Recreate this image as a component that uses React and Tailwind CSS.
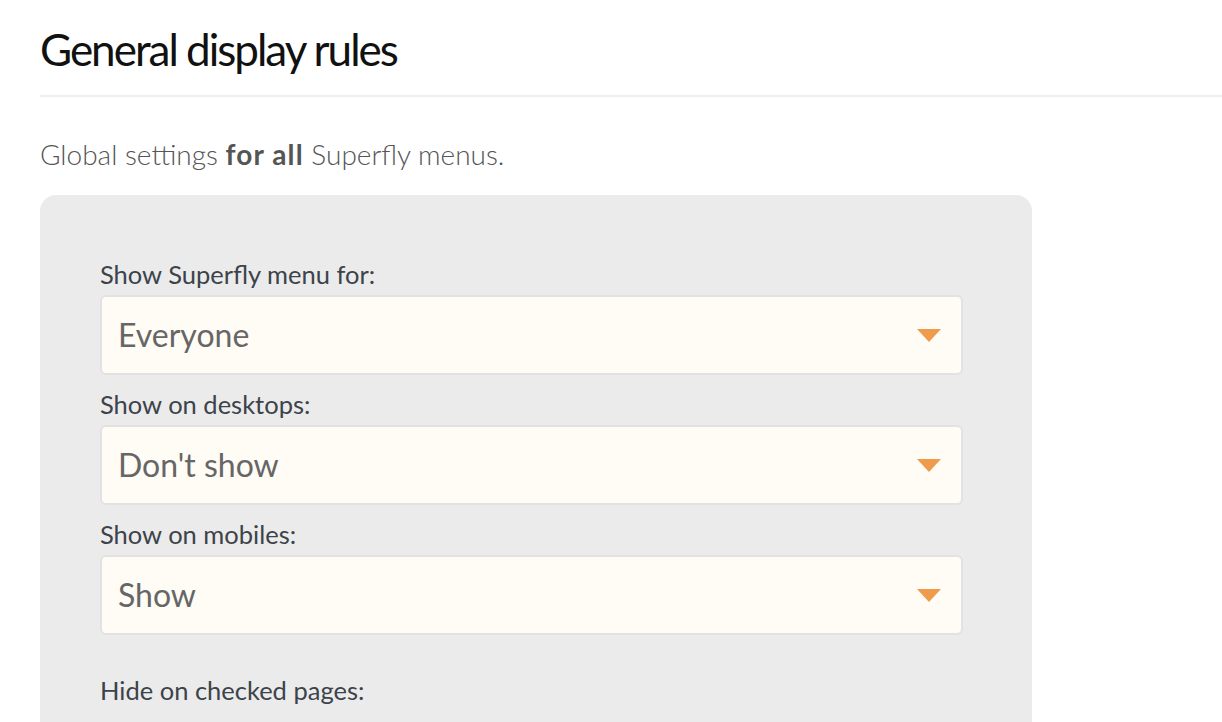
import { useState } from 'react';

const fields = [
  { label: 'Show Superfly menu for:', value: 'Everyone' },
  { label: 'Show on desktops:', value: "Don't show" },
  { label: 'Show on mobiles:', value: 'Show' },
];

function SelectBox({ value }) {
  return (
    <div className="relative flex h-[80px] w-[863px] items-center rounded-[6px] border-2 border-[#e2e2e2] bg-[#fffbf5] pl-[16px]">
      <span className="text-[32px] leading-none text-[#666]">{value}</span>
      {/* orange caret */}
      <svg className="absolute right-[20px] top-[32px]" width="24" height="13" viewBox="0 0 24 13">
        <path d="M0 0 H24 L12 13 Z" fill="#ee9b4b" />
      </svg>
    </div>
  );
}

export default function App() {
  const [values] = useState(fields);

  return (
    <div className="min-h-screen bg-white pl-[40px] font-['Lato',sans-serif]">
      <h1 className="pt-[23px] pb-[19px] text-[44px] leading-[1.2] tracking-[-2px] text-[#111]">
        General display rules
      </h1>
      <div className="h-[2px] bg-[#eeeeee]" />

      <p className="mt-[39px] text-[28px] font-light leading-[36px] text-[#555]">
        Global settings <strong className="font-bold tracking-[1.1px]">for all</strong> Superfly menus.
      </p>

      {/* settings panel */}
      <div className="mt-[23px] w-[992px] rounded-t-[16px] bg-[#ebebeb] pl-[60px] pt-[64px] pb-[40px]">
        {values.map((f, i) => (
          <div key={f.label} className={i > 0 ? 'mt-[14px]' : ''}>
            <label className="mb-[6px] block text-[25.5px] leading-[30px] text-[#3c434a]">{f.label}</label>
            <SelectBox value={f.value} />
          </div>
        ))}
        <label className="mt-[40px] block text-[25.5px] leading-[30px] text-[#3c434a]">Hide on checked pages:</label>
      </div>
    </div>
  );
}
